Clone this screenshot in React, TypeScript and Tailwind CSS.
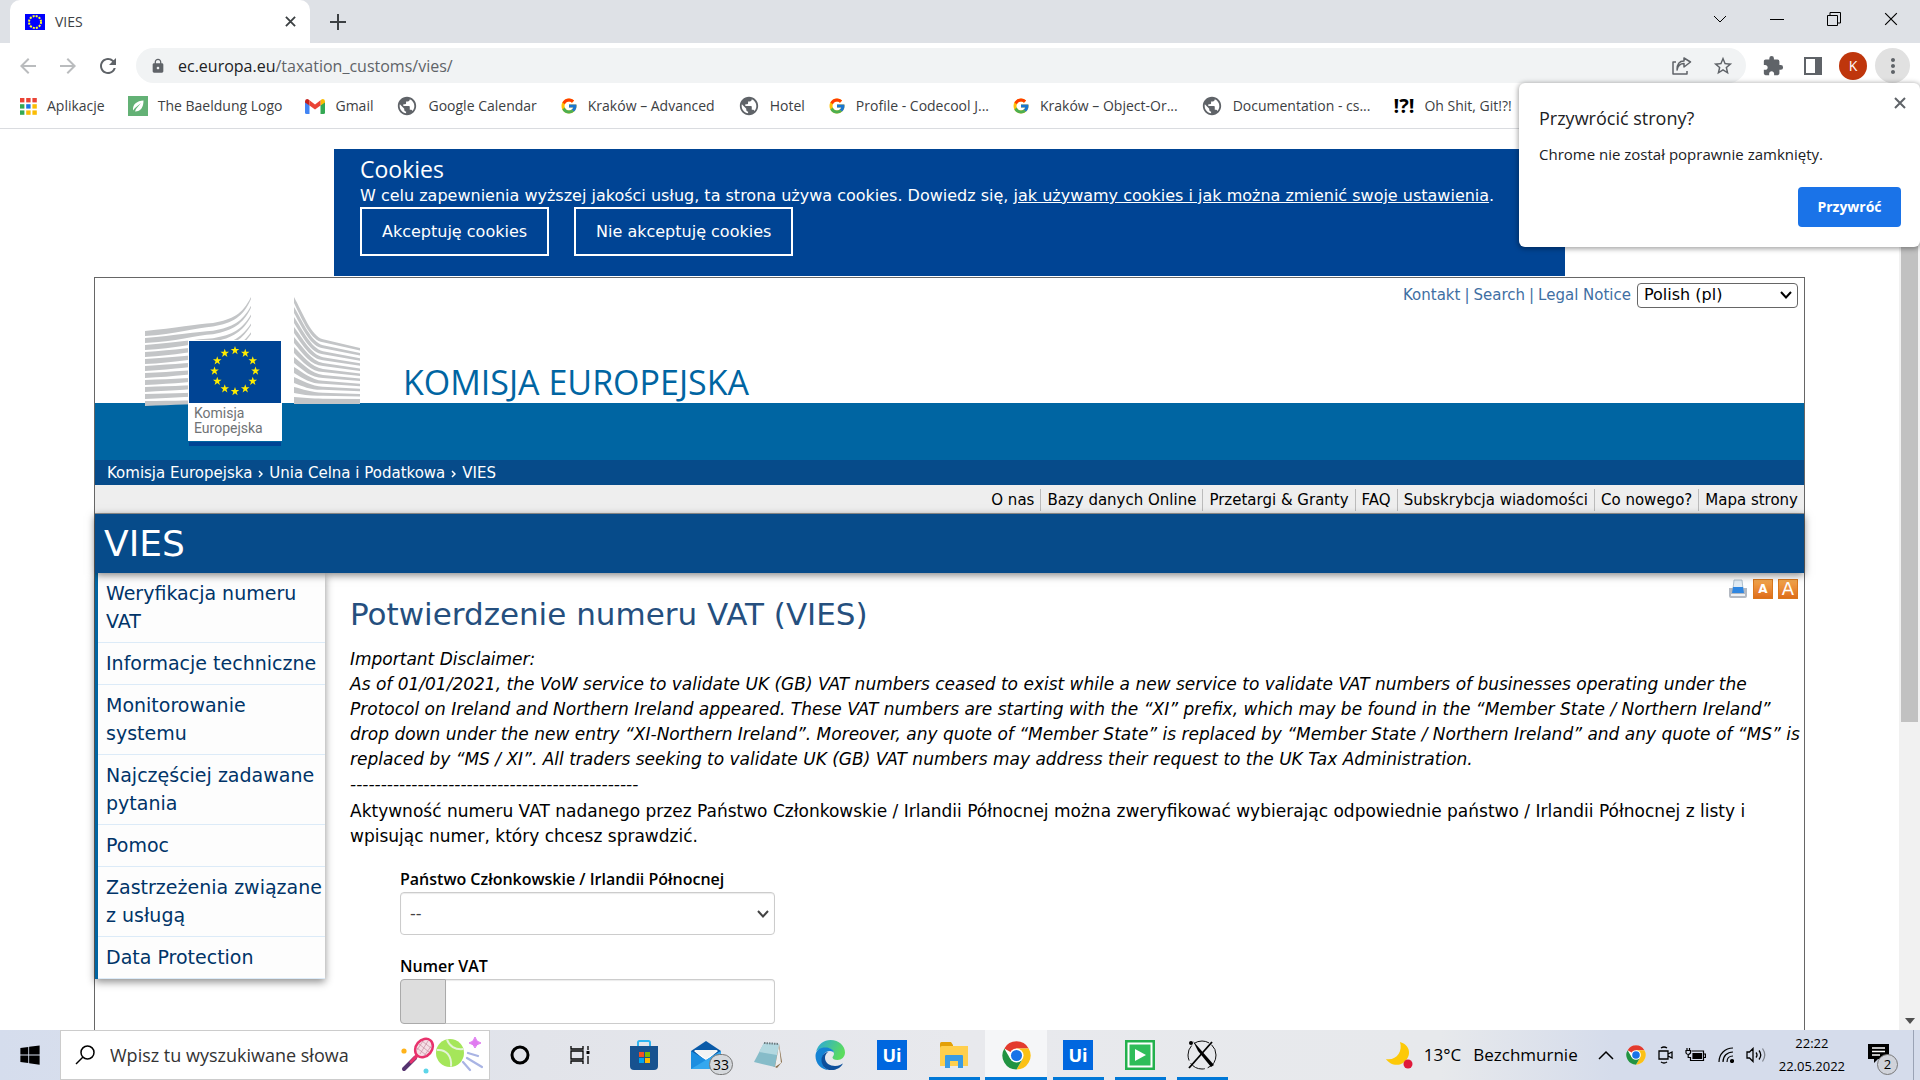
import type { ReactNode } from "react";
import { FcGoogle } from "react-icons/fc";
import { FaWindows } from "react-icons/fa";
import { MdArrowBack, MdArrowForward, MdExtension, MdLock, MdMoreVert, MdPublic, MdRefresh, MdStarBorder } from "react-icons/md";

const PAGE_FONT = "font-['DejaVu_Sans',Verdana,sans-serif]";
const UI_FONT = "font-['Open_Sans','Segoe_UI',sans-serif]";

function starPoints(cx: number, cy: number, r: number) {
  return Array.from({ length: 10 }, (_, i) => {
    const a = (Math.PI * i) / 5 - Math.PI / 2;
    const rr = i % 2 ? r * 0.4 : r;
    return `${(cx + rr * Math.cos(a)).toFixed(2)},${(cy + rr * Math.sin(a)).toFixed(2)}`;
  }).join(" ");
}

function StarRing({ cx, cy, ring, size, fill }: { cx: number; cy: number; ring: number; size: number; fill: string }) {
  return (
    <g fill={fill}>
      {Array.from({ length: 12 }, (_, i) => {
        const a = (Math.PI * i) / 6;
        return <polygon key={i} points={starPoints(cx + ring * Math.cos(a), cy + ring * Math.sin(a), size)} />;
      })}
    </g>
  );
}

function FlagFavicon() {
  return (
    <svg viewBox="0 0 20 16" className="h-4 w-5">
      <rect width="20" height="16" fill="#0000fe" />
      <circle cx="10" cy="8" r="6" fill="none" stroke="#ffff28" strokeWidth="2" strokeDasharray="2 1.14" />
    </svg>
  );
}

function CommissionLogo() {
  const rows = Array.from({ length: 12 }, (_, i) => i);
  return (
    <svg viewBox="0 0 216 150" className="h-[150px] w-[216px]" role="img" aria-label="Komisja Europejska">
      <g fill="#c3c5c7">
        {rows.slice(0, 11).map((i) => {
          const y = 34 + 7 * i;
          const e = 8.8 * i;
          const k = 1 - i / 12;
          const b = y - 8 * k;
          return (
            <path
              key={i}
              d={`M0 ${y} C30 ${y - 3 * k} 52 ${b + 1} 68 ${b} C88 ${b - 4 * k} 97 ${e + 18 * k} 106 ${e} L106 ${e + 2} C98 ${e + 20 * k} 88 ${b} 68 ${b + 3.5} C52 ${b + 4.5} 30 ${y + 3.5} 0 ${y + 5} Z`}
            />
          );
        })}
        {rows.slice(0, 11).map((i) => {
          const y = 10 * i;
          const e = 51 + 5.1 * i;
          const d = e - y;
          return (
            <path
              key={i}
              d={`M149 ${y} C158 ${y + 0.32 * d} 166 ${y + 0.76 * d} 178 ${y + 0.83 * d} L215 ${e} V${e + 2.5} L178 ${y + 0.83 * d + 3} C166 ${y + 0.78 * d + 4} 158 ${y + 0.38 * d + 5} 149 ${y + 6} Z`}
            />
          );
        })}
        <rect x="0" y="104" width="106" height="3" />
        <rect x="149" y="104" width="66" height="3" />
      </g>
      <rect x="43" y="43" width="94" height="64" fill="#fff" />
      <rect x="44" y="44" width="92" height="62" fill="#004494" />
      <StarRing cx={90} cy={74} ring={20.5} size={4.5} fill="#ffec00" />
      <rect x="43" y="107" width="94" height="37" fill="#fff" />
      <rect x="44" y="145" width="92" height="4" fill="#004494" />
      <text x="49" y="121" fontFamily="Roboto, sans-serif" fontSize="14" fill="#6f7376">Komisja</text>
      <text x="49" y="136" fontFamily="Roboto, sans-serif" fontSize="14" fill="#6f7376">Europejska</text>
    </svg>
  );
}

function AppsGrid() {
  const colors = ["#ea4335", "#ea4335", "#ea4335", "#34a853", "#1a73e8", "#fbbc04", "#34a853", "#fbbc04", "#fbbc04"];
  return (
    <svg viewBox="0 0 17 17" className="size-[17px]">
      {colors.map((c, i) => (
        <rect key={i} x={(i % 3) * 6.2} y={Math.floor(i / 3) * 6.2} width="4.4" height="4.4" fill={c} />
      ))}
    </svg>
  );
}

function Leaf() {
  return (
    <svg viewBox="0 0 20 20" className="size-5">
      <rect width="20" height="20" fill="#63b175" />
      <path d="M15.5 4.5C9 5 4.500 8 5 14.500l2-2.500 6-5-5 6-1 2.500C13 15.500 15.500 11 15.500 4.500Z" fill="#fff" />
    </svg>
  );
}

function Gmail() {
  return (
    <svg viewBox="0 0 20 15" className="h-[15px] w-5">
      <path d="M0 2.500V13.500Q0 15 1.500 15H4.500V6Z" fill="#4285f4" />
      <path d="M20 2.500V13.500Q20 15 18.500 15H15.500V6Z" fill="#34a853" />
      <path d="M0 2.500Q0 0 2 0 3 0 4.500 1.300V6.500L0 3.500Z" fill="#c5221f" />
      <path d="M15.500 1.300Q17 0 18 0 20 0 20 2.500V3.500L15.500 6.500Z" fill="#fbbc04" />
      <path d="M4.500 1.300 10 5.400 15.500 1.300V6.500L10 10.600 4.500 6.500Z" fill="#ea4335" />
    </svg>
  );
}

const Globe = () => <MdPublic className="size-[22px] text-[#5f6368]" />;

const BOOKMARKS: { label: string; icon: ReactNode }[] = [
  { label: "Aplikacje", icon: <AppsGrid /> },
  { label: "The Baeldung Logo", icon: <Leaf /> },
  { label: "Gmail", icon: <Gmail /> },
  { label: "Google Calendar", icon: <Globe /> },
  { label: "Kraków – Advanced", icon: <FcGoogle className="size-[18px]" /> },
  { label: "Hotel", icon: <Globe /> },
  { label: "Profile - Codecool J...", icon: <FcGoogle className="size-[18px]" /> },
  { label: "Kraków – Object-Or...", icon: <FcGoogle className="size-[18px]" /> },
  { label: "Documentation - cs...", icon: <Globe /> },
  { label: "Oh Shit, Git!?!", icon: <b className="text-xl leading-5 text-black">!?!</b> },
];

function CloseIcon({ className }: { className: string }) {
  return (
    <svg viewBox="0 0 12 12" className={className} fill="none" stroke="currentColor">
      <path d="M1 1 11 11M11 1 1 11" />
    </svg>
  );
}

function TabStrip() {
  return (
    <header className="flex h-[43px] items-stretch bg-[#dee1e6] pl-[10px] text-[#3c4043]">
      <div className="flex w-[300px] items-center gap-[10px] rounded-t-[10px] bg-white pr-2.5 pl-[15px]">
        <FlagFavicon />
        <span className="flex-1 text-sm">VIES</span>
        <button aria-label="Zamknij kartę" className="p-1"><CloseIcon className="size-[11px] stroke-2" /></button>
      </div>
      <button aria-label="Nowa karta" className="px-5">
        <svg viewBox="0 0 16 16" className="size-4" fill="none" stroke="currentColor" strokeWidth="2"><path d="M8 0V16M0 8H16" /></svg>
      </button>
      <div className="ml-auto flex items-center text-black">
        <button aria-label="Wyszukaj karty" className="flex w-[57px] justify-center pb-1.5">
          <svg viewBox="0 0 14 8" className="h-2 w-3.5" fill="none" stroke="currentColor"><path d="M1 1 7 7 13 1" /></svg>
        </button>
        <button aria-label="Minimalizuj" className="flex w-[57px] justify-center pb-1.5">
          <svg viewBox="0 0 14 14" className="size-3.5" fill="none" stroke="currentColor"><path d="M0 7.500H14" /></svg>
        </button>
        <button aria-label="Przywróć okno" className="flex w-[57px] justify-center pb-1.5">
          <svg viewBox="0 0 14 14" className="size-3.5" fill="none" stroke="currentColor"><path d="M.5 3.500H10.500V13.500H.5ZM3 3.500V.5H13.500V11H10.500" /></svg>
        </button>
        <button aria-label="Zamknij" className="flex w-[58px] justify-center pb-1.5"><CloseIcon className="size-3.5" /></button>
      </div>
    </header>
  );
}

function Toolbar() {
  return (
    <div className="flex h-[45px] items-center pr-[10px] pl-4 text-[#5f6368]">
      <button aria-label="Wstecz" className="mr-4 text-[#babcbe]"><MdArrowBack className="size-6" /></button>
      <button aria-label="Dalej" className="mr-4 text-[#babcbe]"><MdArrowForward className="size-6" /></button>
      <button aria-label="Odśwież" className="mr-4"><MdRefresh className="size-6" /></button>
      <div className="flex h-[35px] flex-1 items-center rounded-full bg-[#f1f3f4] pr-3 pl-3.5">
        <MdLock className="size-4" />
        <span className="flex-1 pl-3 text-base">
          <span className="text-[#202124]">ec.europa.eu</span>/taxation_customs/vies/
        </span>
        <button aria-label="Udostępnij" className="mr-5">
          <svg viewBox="0 0 20 18" className="h-[18px] w-5" fill="none" stroke="currentColor" strokeWidth="1.500">
            <path d="M4 5H1V17H15V14M5 13C6 8 9 6.500 12 6.500V10L18.500 5 12 1V4C8 4 5 7 5 13Z" strokeLinejoin="round" />
          </svg>
        </button>
        <button aria-label="Dodaj do zakładek"><MdStarBorder className="size-[22px]" /></button>
      </div>
      <button aria-label="Rozszerzenia" className="ml-4"><MdExtension className="size-[22px]" /></button>
      <button aria-label="Panel boczny" className="ml-5">
        <svg viewBox="0 0 18 18" className="size-[18px]" fill="none" stroke="currentColor" strokeWidth="2"><path d="M1 1H17V17H1ZM12 1H17V17H12Z" /><path d="M14.500 1V17" strokeWidth="5" /></svg>
      </button>
      <button aria-label="Profil" className="ml-[17px] flex size-7 items-center justify-center rounded-full bg-[#bf360c] text-sm text-white">K</button>
      <button aria-label="Menu" className="ml-2 flex size-[35px] items-center justify-center rounded-full bg-[#e1e1e1]"><MdMoreVert className="size-6" /></button>
    </div>
  );
}

function BookmarksBar() {
  return (
    <nav aria-label="Zakładki" className="flex h-[41px] items-center gap-[23px] overflow-hidden border-b border-[#dadce0] pb-1 pl-5 text-sm text-[#3c4043]">
      {BOOKMARKS.map((b, i) => (
        <a key={i} href="#" className="flex shrink-0 items-center gap-[10px] whitespace-nowrap">{b.icon}{b.label}</a>
      ))}
    </nav>
  );
}

function RestoreDialog() {
  return (
    <div role="dialog" aria-labelledby="restore-title" className="absolute top-[83px] right-0 z-30 flex w-[401px] flex-col rounded-md bg-white pt-[23px] pr-[19px] pb-5 pl-5 text-[#202124] shadow-[0_1px_5px_1px_rgba(0,0,0,0.35)]">
      <button aria-label="Zamknij" className="absolute top-3.5 right-3.5 text-[#5f6368]"><CloseIcon className="size-3 stroke-2" /></button>
      <h2 id="restore-title" className="text-lg leading-6">Przywrócić strony?</h2>
      <p className="mt-3 text-[15px] leading-6">Chrome nie został poprawnie zamknięty.</p>
      <button className="mt-[21px] h-10 w-[103px] self-end rounded bg-[#1a73e8] text-sm font-bold text-white">Przywróć</button>
    </div>
  );
}

function CookieBanner() {
  return (
    <section className="mx-auto mt-5 h-[127px] w-[1231px] max-w-full bg-[#004494] px-[26px] pt-[5px] text-base text-white">
      <h2 className={`${UI_FONT} text-[23px] leading-[31px] font-medium`}>Cookies</h2>
      <p className="leading-[22px] whitespace-nowrap">
        W celu zapewnienia wyższej jakości usług, ta strona używa cookies. Dowiedz się, <a href="#" className="underline">jak używamy cookies i jak można zmienić swoje ustawienia</a>.
      </p>
      <div className="flex gap-[25px]">
        <button className="h-[49px] border-2 border-white px-5">Akceptuję cookies</button>
        <button className="h-[49px] border-2 border-white px-5">Nie akceptuję cookies</button>
      </div>
    </section>
  );
}

const NAV = ["O nas", "Bazy danych Online", "Przetargi & Granty", "FAQ", "Subskrybcja wiadomości", "Co nowego?", "Mapa strony"];
const SIDE = ["Weryfikacja numeru VAT", "Informacje techniczne", "Monitorowanie systemu", "Najczęściej zadawane pytania", "Pomoc", "Zastrzeżenia związane z usługą", "Data Protection"];

function SelectArrow({ className }: { className: string }) {
  return (
    <svg viewBox="0 0 12 8" className={className} fill="none" stroke="currentColor" strokeWidth="2"><path d="M1 1 6 6.500 11 1" /></svg>
  );
}

function Crumb() {
  return (
    <svg viewBox="0 0 5 8" className="h-2 w-[5px]" fill="none" stroke="currentColor" strokeWidth="1.500"><path d="M1 1 4 4 1 7" /></svg>
  );
}

function SiteHeader() {
  return (
    <header className="flex h-[182px] justify-between bg-[linear-gradient(to_bottom,#fff_125px,#0065a2_125px)]">
      <div className="flex gap-[42px] pt-[19px] pl-[50px]">
        <CommissionLogo />
        <p className={`${UI_FONT} mt-[62px] text-[34px] leading-[46px] font-medium text-[#0065a2]`}>KOMISJA EUROPEJSKA</p>
      </div>
      <div className="flex h-[34px] items-center gap-1 pr-1.5 text-[15px] text-[#3f6fa3]">
        <a href="#">Kontakt</a>
        <span>|</span>
        <a href="#">Search</a>
        <span>|</span>
        <a href="#">Legal Notice</a>
        <div className="relative ml-0.5 flex items-center text-black">
          <select aria-label="Język" className="h-[25px] w-[161px] appearance-none rounded-sm border border-[#666] bg-white pl-1.5 text-base leading-5">
            <option>Polish (pl)</option>
          </select>
          <SelectArrow className="pointer-events-none absolute right-1.5 h-2 w-3" />
        </div>
      </div>
    </header>
  );
}

function PageTools() {
  return (
    <div className="flex justify-end gap-[5px] pt-1.5 pr-1.5">
      <button aria-label="Drukuj">
        <svg viewBox="0 0 20 20" className="size-5">
          <path d="M6 1h8l1 9H5Z" fill="#e3edf5" stroke="#9fb4c4" strokeWidth=".8" />
          <path d="M1 9h4l1 3h8l1-3h4v8q0 2-2 2H3q-2 0-2-2Z" fill="#b3b9c2" />
          <path d="M5 8h10l1 6H4Z" fill="#2f86e0" />
          <path d="M3 15h14v2H3Z" fill="#eef1f4" />
        </svg>
      </button>
      <button aria-label="Mniejszy tekst" className="flex size-5 items-center justify-center border border-[#d9771c] bg-linear-to-b from-[#f3a64c] to-[#de6d18] text-xs font-bold text-white">A</button>
      <button aria-label="Większy tekst" className="flex size-5 items-center justify-center border border-[#d9771c] bg-linear-to-b from-[#f3a64c] to-[#de6d18] text-lg text-white">A</button>
    </div>
  );
}

function ViesPage() {
  return (
    <div className={`${PAGE_FONT} min-w-0 flex-1 overflow-hidden`}>
      <CookieBanner />
      <div className="mx-[94px] mt-px min-h-screen border border-[#666]">
        <SiteHeader />
        <nav aria-label="Ścieżka" className="flex h-[25px] items-center gap-1.5 bg-[#064b8a] pt-0.5 pl-3 text-[15px] text-white">
          <a href="#">Komisja Europejska</a>
          <Crumb />
          <a href="#">Unia Celna i Podatkowa</a>
          <Crumb />
          <a href="#">VIES</a>
        </nav>
        <nav aria-label="Nawigacja" className="flex h-[29px] items-center justify-end border-b border-[#999] bg-[#eee] pt-0.5 text-[15px] leading-[22px]">
          {NAV.map((n) => (
            <a key={n} href="#" className="border-l border-[#bbb] px-1.5 first:border-l-0">{n}</a>
          ))}
        </nav>
        <h1 className="relative z-10 bg-[#064b8a] pl-[9px] text-[36px] leading-[59px] text-white shadow-[0_2px_8px_rgba(0,0,0,0.5)]">VIES</h1>
        <div className="flex items-start">
          <nav aria-label="Menu" className="w-[230px] shrink-0 border-l-3 border-[#0065a2] bg-[#fdfdfd] text-[19px] leading-7 text-[#003468] shadow-[0_3px_8px_rgba(0,0,0,0.45)]">
            {SIDE.map((s) => (
              <a key={s} href="#" className="block border-b border-[#dcebf8] pt-1.5 pb-[7px] pl-2">{s}</a>
            ))}
          </nav>
          <main className="min-w-0 flex-1 pl-[25px] text-[17px] leading-[25px] text-black">
            <PageTools />
            <h2 className="-mt-1 text-[31px] leading-[38px] text-[#254f7e]">Potwierdzenie numeru VAT (VIES)</h2>
            <p className="mt-3.5 italic">
              Important Disclaimer:<br />
              As of 01/01/2021, the VoW service to validate UK (GB) VAT numbers ceased to exist while a new service to validate VAT numbers of businesses operating under the Protocol on Ireland and Northern Ireland appeared. These VAT numbers are starting with the “XI” prefix, which may be found in the “Member State / Northern Ireland” drop down under the new entry “XI-Northern Ireland”. Moreover, any quote of “Member State” is replaced by “Member State / Northern Ireland” and any quote of “MS” is replaced by “MS / XI”. All traders seeking to validate UK (GB) VAT numbers may address their request to the UK Tax Administration.<br />
              -----------------------------------------------
            </p>
            <p className="mt-0.5 pr-10">
              Aktywność numeru VAT nadanego przez Państwo Członkowskie / Irlandii Północnej można zweryfikować wybierając odpowiednie państwo / Irlandii Północnej z listy i wpisując numer, który chcesz sprawdzić.
            </p>
            <form className="mt-[18px] ml-[50px] w-[375px] text-base">
              <label htmlFor="country" className={`${UI_FONT} block leading-[25px] font-semibold whitespace-nowrap`}>Państwo Członkowskie / Irlandii Północnej</label>
              <div className="relative flex items-center text-[#444]">
                <select id="country" className="h-[43px] w-full appearance-none rounded border border-[#ccc] bg-white pl-[9px] shadow-[inset_0_1px_1px_rgba(0,0,0,0.08)]">
                  <option>--</option>
                </select>
                <SelectArrow className="pointer-events-none absolute right-1.5 h-2 w-3" />
              </div>
              <label htmlFor="vat" className={`${UI_FONT} mt-[18px] block leading-[26px] font-semibold`}>Numer VAT</label>
              <div className="flex h-[45px]">
                <span className="w-[46px] rounded-l border border-[#aaa] bg-[#ddd]" />
                <input id="vat" className="min-w-0 flex-1 rounded-r border border-l-0 border-[#ccc] px-3 shadow-[inset_0_1px_1px_rgba(0,0,0,0.08)]" />
              </div>
            </form>
          </main>
        </div>
      </div>
    </div>
  );
}

function Scrollbar() {
  return (
    <div aria-hidden="true" className="flex w-[21px] flex-col items-center justify-between bg-[#f1f1f1] pb-1.5">
      <div className="mt-[17px] h-[576px] w-[17px] bg-[#c1c1c1]" />
      <svg viewBox="0 0 10 6" className="h-1.5 w-2.5"><path d="M0 0H10L5 6Z" fill="#505050" /></svg>
    </div>
  );
}

function ChromeLogo({ className }: { className: string }) {
  return (
    <svg viewBox="0 0 30 30" className={className}>
      <circle cx="15" cy="15" r="14.500" fill="#fff" />
      <path d="M15 15 2.400 7.700A14.500 14.500 0 0 1 27.600 7.700H15Z" fill="#e33b2e" />
      <path d="M15 15 27.600 7.700A14.500 14.500 0 0 1 15 29.500L21.300 18.700Z" fill="#fbc116" />
      <path d="M15 15 21.300 18.600 15 29.500A14.500 14.500 0 0 1 2.400 7.700L8.700 18.600Z" fill="#229342" />
      <path d="M15 7.700H27.600L21.300 18.600Z" fill="#fbc116" />
      <circle cx="15" cy="15" r="7.300" fill="#fff" />
      <circle cx="15" cy="15" r="5.700" fill="#1a73e8" />
    </svg>
  );
}

function RacketArt() {
  return (
    <svg viewBox="0 0 82 38" className="h-[38px] w-[82px]">
      <path d="M14 22 3 33" stroke="#55336f" strokeWidth="4" strokeLinecap="round" />
      <path d="M16 19 10 26M16 20 12 24" stroke="#e8336d" strokeWidth="3" strokeLinecap="round" />
      <ellipse cx="23" cy="12" rx="10" ry="8" transform="rotate(-50 23 12)" fill="#f5dfe6" stroke="#e8336d" strokeWidth="2.500" />
      <path d="M18 8 28 16M21 5 30 12M16 12 25 19M19 18 27 5M23 20 31 9M16 14 22 5" stroke="#c98ea0" strokeWidth=".7" />
      <circle cx="49" cy="17" r="14" fill="#a5e65a" />
      <path d="M36 14C45 13 51 20 50 30.500M46 3.500C48 10 54 14 62.500 13" fill="none" stroke="#e4f3d8" strokeWidth="2" />
      <circle cx="3" cy="15" r="2.600" fill="#ffb31a" />
      <circle cx="25" cy="35" r="2.500" fill="#5dd5e8" />
      <path d="M74 1Q75 6 80 7 75 8 74 12 73 8 68 7 73 6 74 1Z" fill="#e07bf0" stroke="#e07bf0" />
      <path d="M67 17 77 20M66 22 81 31M62 26 69 34" stroke="#a9b4e4" strokeWidth="2.200" strokeLinecap="round" />
    </svg>
  );
}

function StoreIcon() {
  return (
    <svg viewBox="0 0 30 30" className="size-[30px]">
      <path d="M9 7V2.500Q9 1 10.500 1h9Q21 1 21 2.500V7" fill="none" stroke="#2fb4f0" strokeWidth="2" />
      <path d="M1 6H29V26Q29 30 25 30H5Q1 30 1 26Z" fill="#17528f" />
      <path d="M10 12h5v5h-5Z" fill="#f25022" /><path d="M16 12h5v5h-5Z" fill="#7fba00" />
      <path d="M10 18h5v5h-5Z" fill="#00a4ef" /><path d="M16 18h5v5h-5Z" fill="#ffb900" />
    </svg>
  );
}

function MailIcon() {
  return (
    <span className="relative">
      <svg viewBox="0 0 30 30" className="size-[30px]">
        <path d="M0 11 15 1 30 11V28H0Z" fill="#0a5aa8" />
        <path d="M3 11H27L15 21Z" fill="#fff" />
        <path d="M0 11 15 20 30 11V29H0Z" fill="#1c8ee0" />
        <path d="M0 29 30 11V29Z" fill="#35a8ef" />
        <path d="M3 10H27L15 19Z" fill="#f3f3f3" />
      </svg>
      <span className="absolute top-3.5 left-[18px] flex h-[21px] w-6 items-center justify-center rounded-full border border-[#777] bg-[#d5d8dc] text-sm text-black">33</span>
    </span>
  );
}

function NotepadIcon() {
  return (
    <svg viewBox="0 0 30 30" className="size-[30px]">
      <path d="M26 4 29 22 24 28 20 26Z" fill="#8a6f4c" />
      <path d="M11 3 26 4 22 27 1 22Z" fill="#86bcc9" />
      <path d="M11 3 26 4 24 15 6 12Z" fill="#b3d8e0" />
      <path d="M11 3 26 4" stroke="#6e7b80" strokeWidth="2" strokeDasharray="1.500 1" />
      <path d="M26 5 28 23 22 27Z" fill="#eee" />
    </svg>
  );
}

function EdgeIcon() {
  return (
    <svg viewBox="0 0 30 30" className="size-[30px]">
      <defs>
        <linearGradient id="edge-top" x1="0" y1="0" x2="1" y2=".4"><stop offset="0" stopColor="#2aa5e0" /><stop offset="1" stopColor="#5bdc5e" /></linearGradient>
      </defs>
      <path d="M1 12C3 4 9 0 15.500 0 24 0 30 6 30 12.500 30 17 26.500 20 22.500 20 19 20 17.500 18.500 17.500 17.500 17.500 16.500 19 16 19 13.500 19 10 15 8 11 8 6 8 2 10 1 12Z" fill="url(#edge-top)" />
      <path d="M.5 16C.5 10 5 7.500 10.500 7.500 15.500 7.500 19 10 19 13.500 19 12 17 11 15 11 10 11 7 15.500 7 20 7 25 10 29 14 30 6 30 .5 23.500 .5 16Z" fill="#1583d4" />
      <path d="M13 12C10.500 14 10 16 10 18 10 23 15 26 20 26 24 26 27 24 28 23.500 26 27.500 20.500 31 14 30 9 28.500 6.500 24.500 6.500 20 6.500 16 9 12.500 13 12Z" fill="#0c4f9c" />
    </svg>
  );
}

const UiIcon = () => (
  <span className="flex size-[30px] items-center justify-center bg-[#0067df] text-lg font-bold text-white">Ui</span>
);

function FolderIcon() {
  return (
    <svg viewBox="0 0 28 26" className="h-[26px] w-7">
      <path d="M0 1.500Q0 0 1.500 0H11L13 3V8H0Z" fill="#e3a008" />
      <path d="M0 6Q0 4 2 4H28V24H0Z" fill="#ffcf4d" />
      <path d="M5 26V14Q5 13 6 13H22Q23 13 23 14V26H18V19H10V26Z" fill="#3a9be4" />
    </svg>
  );
}

function PlayTile() {
  return (
    <svg viewBox="0 0 30 30" className="size-[30px]">
      <rect width="30" height="30" fill="#23b14d" />
      <rect x="3.500" y="3.500" width="23" height="23" fill="#2fbd59" stroke="#fff" strokeWidth="2" />
      <path d="M10 9 21 15 10 21Z" fill="#fff" />
    </svg>
  );
}

function CrossTile() {
  return (
    <svg viewBox="0 0 30 30" className="size-[30px]">
      <circle cx="15" cy="15" r="14" fill="none" stroke="#111" strokeDasharray="16 3" />
      <path d="M6 1 27 25 24 27 11 11Z" />
      <path d="M25 2 2 28" stroke="#000" strokeWidth="1.800" />
      <circle cx="4" cy="3" r="2" />
    </svg>
  );
}

const APPS: { name: string; icon: ReactNode; open?: boolean; active?: boolean }[] = [
  { name: "Microsoft Store", icon: <StoreIcon /> },
  { name: "Poczta", icon: <MailIcon /> },
  { name: "Notatnik", icon: <NotepadIcon /> },
  { name: "Edge", icon: <EdgeIcon /> },
  { name: "UiPath", icon: <UiIcon /> },
  { name: "Eksplorator plików", icon: <FolderIcon />, open: true },
  { name: "Chrome", icon: <ChromeLogo className="size-[29px]" />, open: true, active: true },
  { name: "UiPath Studio", icon: <UiIcon />, open: true },
  { name: "Camtasia", icon: <PlayTile />, open: true },
  { name: "X", icon: <CrossTile />, open: true },
];

function Taskbar() {
  return (
    <footer className="flex h-[50px] items-stretch bg-[linear-gradient(to_right,#d5dded_0,#e2e4ea_28%,#e8e9ed_50%,#e7e9ec_75%,#d5dceb_84%,#d5dceb_100%)] text-black">
      <button aria-label="Start" className="flex w-[60px] items-center justify-center"><FaWindows className="size-[22px]" /></button>
      <label className="flex w-[430px] items-center border border-[#ccc] bg-white pr-1.5 pl-3.5">
        <svg viewBox="0 0 20 20" className="size-5" fill="none" stroke="currentColor" strokeWidth="1.500"><circle cx="12.500" cy="7.500" r="6.500" /><path d="M8 12 1 19" /></svg>
        <input aria-label="Wyszukaj" placeholder="Wpisz tu wyszukiwane słowa" className="min-w-0 flex-1 pl-[15px] text-lg placeholder:text-[#333]" />
        <RacketArt />
      </label>
      <button aria-label="Cortana" className="flex w-[60px] items-center justify-center">
        <svg viewBox="0 0 20 20" className="size-5" fill="none" stroke="currentColor" strokeWidth="3"><circle cx="10" cy="10" r="8" /></svg>
      </button>
      <button aria-label="Widok zadań" className="flex w-[60px] items-center justify-center">
        <svg viewBox="0 0 20 20" className="size-5" fill="none" stroke="currentColor" strokeWidth="1.300"><path d="M1 1V4H13V1M1 6H13V14H1ZM1 19V16H13V19M18 1V5M18 11V19" /><path d="M18 6V9" strokeWidth="3" /></svg>
      </button>
      <div className="ml-[3px] flex">
        {APPS.map((a) => (
          <button key={a.name} aria-label={a.name} className={a.active ? "flex w-[62px] flex-col items-center bg-[#f5f6f8]" : "flex w-[62px] flex-col items-center"}>
            <span className="flex flex-1 items-center pt-[3px]">{a.icon}</span>
            <span className={a.active ? "h-[3px] w-full bg-[#0078d7]" : a.open ? "h-[3px] w-[51px] bg-[#0078d7]" : "h-[3px]"} />
          </button>
        ))}
      </div>
      <div className="ml-auto flex items-center pr-1.5">
        <svg viewBox="0 0 27 27" className="size-[27px]">
          <path d="M14 0C25 3 26 15 17 21 11 25 3 22 0 17 10 19 17 10 14 0Z" fill="#fdc908" />
          <circle cx="22" cy="22" r="4.500" fill="#e01a3a" />
        </svg>
        <span className="ml-[11px] text-[17px]">13°C</span>
        <span className="ml-3 text-[17px]">Bezchmurnie</span>
        <svg viewBox="0 0 16 10" className="ml-5 h-2.5 w-4" fill="none" stroke="currentColor" strokeWidth="1.500"><path d="M1 9 8 2 15 9" /></svg>
        <ChromeLogo className="ml-3 size-5" />
        <svg viewBox="0 0 15 18" className="ml-3 h-[18px] w-[15px]" fill="none" stroke="currentColor" strokeWidth="1.300"><path d="M1 5H10V13H1ZM10 8 14 6V12L10 10M3 2Q6 0 9 2M3 16Q6 18 9 16" /></svg>
        <svg viewBox="0 0 21 14" className="ml-3 h-3.5 w-[21px]" fill="none" stroke="currentColor" strokeWidth="1.200"><path d="M6.500 3H18.500V12.500H5.500V9M18.500 6H20.500V9.500H18.500M1 2.500H5.500V5Q3 8 1 5ZM2 0V2.500M4.500 0V2.500M3.200 7V9.500H5" /><path d="M8 5.500H16.500V10.500H8Z" fill="currentColor" /></svg>
        <svg viewBox="0 0 16 16" className="ml-3 size-4" fill="none" stroke="currentColor" strokeWidth="1.200"><path d="M1 15C1 7 7 1 15 1M5 15C5 9 9 5 15 5M9 15Q9 9 15 9" /><circle cx="14" cy="14" r="1.500" fill="currentColor" /></svg>
        <svg viewBox="0 0 21 16" className="ml-3 h-4 w-[21px]" fill="none" stroke="currentColor" strokeWidth="1.300"><path d="M1 5H3.500L7 1.500V14.500L3.500 11H1ZM10 5.500Q12 8 10 10.500M13 3.500Q16.500 8 13 12.500" /><path d="M16.500 1.500Q21 8 16.500 14.500" opacity=".4" /></svg>
        <div className="ml-3 text-center text-[13px] leading-[23px]">
          <div>22:22</div>
          <div>22.05.2022</div>
        </div>
        <button aria-label="Powiadomienia" className="relative ml-[23px] flex h-full w-[46px] items-center border-r border-[#9aa3b5]">
          <svg viewBox="0 0 21 19" className="mb-1 h-[19px] w-[21px]"><path d="M0 0H21V15H10L6 19V15H0Z" /><path d="M4 4H17M4 7.500H17M4 11H12" stroke="#fff" strokeWidth="1.300" /></svg>
          <span className="absolute top-6 left-[9px] flex size-[21px] items-center justify-center rounded-full border border-[#777] bg-[#d0d3da] text-[13px]">2</span>
        </button>
      </div>
    </footer>
  );
}

export default function App() {
  return (
    <div className={`${UI_FONT} relative flex h-screen flex-col overflow-hidden bg-white`}>
      <TabStrip />
      <Toolbar />
      <BookmarksBar />
      <div className="flex min-h-0 flex-1">
        <ViesPage />
        <Scrollbar />
      </div>
      <Taskbar />
      <RestoreDialog />
    </div>
  );
}
